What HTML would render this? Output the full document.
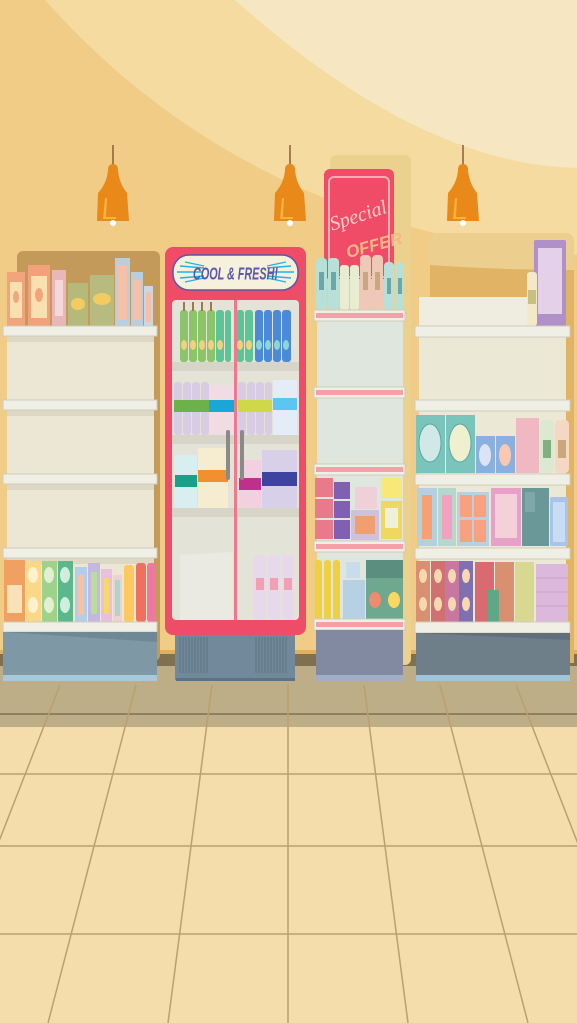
<!DOCTYPE html>
<html><head><meta charset="utf-8"><style>html,body{margin:0;padding:0;width:577px;height:1023px;overflow:hidden;background:#f0cc86}svg{display:block}</style></head>
<body>
<svg width="577" height="1023" viewBox="0 0 577 1023" xmlns="http://www.w3.org/2000/svg">
<rect width="577" height="1023" fill="#f0cc86"/>
<path d="M45 0 Q250 230 577 255 L577 0Z" fill="#f5dba0"/>
<path d="M235 0 Q420 165 577 168 L577 0Z" fill="#f7e6c2"/>
<g id="lamp">
<line x1="113" y1="145" x2="113" y2="170" stroke="#7a4a2a" stroke-width="1.3"/>
<path d="M108 190 Q108 184 113 184 Q118 184 118 190 Q119 203 127 213 L129 241 L97 241 L98 213 Q107 203 108 190Z" fill="#e8891a" transform="translate(0,-20)"/>
<path d="M103 219 L105 198 L107 198 L106 217 L116 217 L116 219Z" fill="#f6b23a"/>
<ellipse cx="113" cy="223" rx="3" ry="3" fill="#fff"/>
</g>
<use href="#lamp" x="177"/>
<use href="#lamp" x="350"/>

<rect x="0" y="650" width="577" height="5" fill="#e0b060"/>
<rect x="0" y="654" width="577" height="12" fill="#7f7050"/>
<rect x="0" y="666" width="577" height="357" fill="#f5dcab"/>
<rect x="0" y="666" width="577" height="61" fill="#bdae88"/>
<g stroke="#b9a070" stroke-width="1.5">
<line x1="0" y1="714" x2="577" y2="714" stroke="#7f7050"/>
<line x1="0" y1="774" x2="577" y2="774"/>
<line x1="0" y1="846" x2="577" y2="846"/>
<line x1="0" y1="934" x2="577" y2="934"/>
<line x1="288" y1="685" x2="288" y2="1023"/>
<line x1="212" y1="685" x2="168" y2="1023"/>
<line x1="136" y1="685" x2="48" y2="1023"/>
<line x1="60" y1="685" x2="-72" y2="1023"/>
<line x1="-16" y1="685" x2="-192" y2="1023"/>
<line x1="364" y1="685" x2="408" y2="1023"/>
<line x1="440" y1="685" x2="528" y2="1023"/>
<line x1="516" y1="685" x2="648" y2="1023"/>
<line x1="592" y1="685" x2="768" y2="1023"/>
</g>

<rect x="17" y="251" width="143" height="410" rx="6" fill="#c49a5a"/>
<rect x="7" y="330" width="147" height="300" fill="#ebe7d4"/>
<g fill="#dcd8c4"><rect x="7" y="336" width="147" height="6"/><rect x="7" y="410" width="147" height="6"/><rect x="7" y="484" width="147" height="6"/><rect x="7" y="558" width="147" height="6"/></g>
<rect x="7" y="272" width="18" height="54" fill="#f2a57a"/><rect x="10" y="282" width="12" height="36" fill="#f8e0b0"/><ellipse cx="16" cy="297" rx="3" ry="6" fill="#f2a57a"/>
<rect x="28" y="265" width="22" height="61" fill="#f3a17a"/><rect x="31" y="276" width="16" height="42" fill="#f8e0b0"/><ellipse cx="39" cy="295" rx="4" ry="7" fill="#f2a57a"/>
<rect x="52" y="270" width="14" height="56" fill="#e9b7b8"/><rect x="55" y="280" width="8" height="36" fill="#f3d8d8"/>
<rect x="68" y="283" width="20" height="43" fill="#b5b97a"/><ellipse cx="78" cy="304" rx="7" ry="6" fill="#f2cc60"/>
<rect x="90" y="275" width="24" height="51" fill="#b8bb80"/><ellipse cx="102" cy="299" rx="9" ry="6" fill="#f2cc60"/>
<rect x="115" y="258" width="15" height="68" fill="#b9cfe0"/><rect x="118" y="265" width="9" height="55" fill="#f4c0a8"/>
<rect x="131" y="272" width="12" height="54" fill="#b9cfe0"/><rect x="133" y="280" width="8" height="40" fill="#f4c0a8"/>
<rect x="144" y="286" width="9" height="40" fill="#c8d8e4"/><rect x="146" y="292" width="5" height="30" fill="#f4c0a8"/>
<rect x="4" y="560" width="21" height="62" fill="#f0a060"/><rect x="7" y="585" width="15" height="28" fill="#fae2b8"/>
<rect x="26" y="561" width="15" height="61" fill="#fbd788"/><ellipse cx="33" cy="575" rx="5" ry="8" fill="#fdf1d0"/><ellipse cx="33" cy="605" rx="5" ry="8" fill="#fdf1d0"/>
<rect x="42" y="561" width="15" height="61" fill="#9ed18a"/><ellipse cx="49" cy="575" rx="5" ry="8" fill="#e0f0d0"/><ellipse cx="49" cy="605" rx="5" ry="8" fill="#e0f0d0"/>
<rect x="58" y="561" width="15" height="61" fill="#5cb88a"/><ellipse cx="65" cy="575" rx="5" ry="8" fill="#d0eedd"/><ellipse cx="65" cy="605" rx="5" ry="8" fill="#d0eedd"/>
<rect x="75" y="567" width="12" height="55" fill="#b4cde8"/><rect x="78" y="575" width="6" height="40" fill="#f4c3a3"/>
<rect x="88" y="563" width="12" height="59" fill="#c5b8e0"/><rect x="91" y="572" width="6" height="42" fill="#b9dd9a"/>
<rect x="101" y="569" width="11" height="53" fill="#e9bfe0"/><rect x="104" y="578" width="5" height="36" fill="#f8d868"/>
<rect x="113" y="575" width="9" height="47" fill="#f0d0d0"/><rect x="115" y="580" width="5" height="36" fill="#a8d8d0"/>
<rect x="124" y="565" width="10" height="57" rx="3" fill="#fcc860"/>
<rect x="136" y="563" width="10" height="59" rx="3" fill="#f07060"/>
<rect x="147" y="563" width="9" height="59" rx="3" fill="#ef78a0"/>
<g fill="#f0efe6" stroke="#cfccba" stroke-width="1">
<rect x="3" y="326" width="154" height="10"/><rect x="3" y="400" width="154" height="10"/><rect x="3" y="474" width="154" height="10"/><rect x="3" y="548" width="154" height="10"/><rect x="3" y="622" width="154" height="10"/>
</g>
<rect x="3" y="632" width="154" height="44" fill="#7f98a5"/><path d="M3 632 L157 632 L157 642 Z" fill="#6f8896"/>
<rect x="3" y="675" width="154" height="6" fill="#a8c8dc"/>

<rect x="175" y="625" width="120" height="55" fill="#71899a"/>
<g stroke="#5d7282" stroke-width="1"><path d="M180 637v36M183 637v36M186 637v36M189 637v36M192 637v36M195 637v36M198 637v36M201 637v36M204 637v36M207 637v36M256 637v36M259 637v36M262 637v36M265 637v36M268 637v36M271 637v36M274 637v36M277 637v36M280 637v36M283 637v36M286 637v36"/></g>
<rect x="176" y="678" width="119" height="3" fill="#5d7282"/>
<rect x="165" y="247" width="141" height="388" rx="8" fill="#ef4c68"/>
<rect x="173" y="255" width="125" height="35" rx="16" fill="#f5f1dc" stroke="#5b58a8" stroke-width="1.5"/>
<g stroke="#22b3e6" stroke-width="1.4"><path d="M177 272h26M180 266l24 2M180 278l24-2M185 262l19 4M185 282l19-4M294 272h-26M291 266l-24 2M291 278l-24-2M286 262l-19 4M286 282l-19-4"/></g>
<text x="235.5" y="279" text-anchor="middle" font-family="Liberation Sans Narrow, Liberation Sans, sans-serif" font-style="italic" font-weight="bold" font-size="15" fill="#5b58a8" transform="translate(235.5,0) scale(0.72,1.15) translate(-235.5,-36)">COOL &amp; FRESH!</text>
<rect x="172" y="300" width="127" height="320" rx="4" fill="#e4e3d8"/>
<path d="M180 555 L233 552 L233 620 L180 620Z" fill="#ebeae2"/>
<g fill="#d6d5c8"><rect x="172" y="362" width="127" height="9"/><rect x="172" y="435" width="127" height="9"/><rect x="172" y="508" width="127" height="9"/></g>
<g fill="#8cc46a"><rect x="180" y="310" width="8" height="52" rx="3"/><rect x="189" y="310" width="8" height="52" rx="3"/><rect x="198" y="310" width="8" height="52" rx="3"/><rect x="207" y="310" width="8" height="52" rx="3"/></g>
<g fill="#5cc496"><rect x="216" y="310" width="8" height="52" rx="3"/><rect x="225" y="310" width="6" height="52" rx="3"/><rect x="236" y="310" width="8" height="52" rx="3"/><rect x="245" y="310" width="8" height="52" rx="3"/></g>
<g fill="#4a8ad8"><rect x="255" y="310" width="8" height="52" rx="3"/><rect x="264" y="310" width="8" height="52" rx="3"/><rect x="273" y="310" width="8" height="52" rx="3"/><rect x="282" y="310" width="9" height="52" rx="3"/></g>
<g fill="#a07a40"><rect x="183" y="302" width="2" height="9"/><rect x="192" y="302" width="2" height="9"/><rect x="201" y="302" width="2" height="9"/><rect x="210" y="302" width="2" height="9"/></g>
<g fill="#f2d080"><ellipse cx="184" cy="345" rx="3" ry="5"/><ellipse cx="193" cy="345" rx="3" ry="5"/><ellipse cx="202" cy="345" rx="3" ry="5"/><ellipse cx="211" cy="345" rx="3" ry="5"/><ellipse cx="220" cy="345" rx="3" ry="5"/><ellipse cx="240" cy="345" rx="3" ry="5"/><ellipse cx="249" cy="345" rx="3" ry="5"/></g>
<g fill="#8cd6d8"><ellipse cx="259" cy="345" rx="3" ry="5"/><ellipse cx="268" cy="345" rx="3" ry="5"/><ellipse cx="277" cy="345" rx="3" ry="5"/><ellipse cx="286" cy="345" rx="3" ry="5"/></g>
<g fill="#d8cce4"><rect x="174" y="382" width="8" height="53" rx="3"/><rect x="183" y="382" width="8" height="53" rx="3"/><rect x="192" y="382" width="8" height="53" rx="3"/><rect x="201" y="382" width="8" height="53" rx="3"/><rect x="238" y="382" width="8" height="53" rx="3"/><rect x="247" y="382" width="8" height="53" rx="3"/><rect x="256" y="382" width="8" height="53" rx="3"/><rect x="265" y="382" width="7" height="53" rx="3"/></g>
<rect x="174" y="400" width="35" height="12" fill="#6eb04a"/>
<rect x="209" y="385" width="25" height="50" fill="#f2dce4"/><rect x="209" y="400" width="25" height="12" fill="#1aa7d8"/>
<rect x="238" y="400" width="34" height="12" fill="#cfd848"/>
<rect x="273" y="380" width="24" height="55" fill="#e4ecf8"/><rect x="273" y="398" width="24" height="12" fill="#5cc6f2"/>
<rect x="175" y="455" width="22" height="53" fill="#d8eef0"/><rect x="175" y="475" width="22" height="12" fill="#18a088"/>
<rect x="198" y="448" width="30" height="60" fill="#f6ecd0"/><rect x="198" y="470" width="30" height="12" fill="#f29030"/>
<rect x="239" y="460" width="22" height="48" fill="#f2d0e0"/><rect x="239" y="478" width="22" height="12" fill="#c0308a"/>
<rect x="262" y="450" width="35" height="58" fill="#d8d0e8"/><rect x="262" y="472" width="35" height="14" fill="#3c44a0"/>
<rect x="226" y="430" width="4" height="50" rx="2" fill="#8a8a8a"/><rect x="240" y="430" width="4" height="50" rx="2" fill="#8a8a8a"/>
<g fill="#e8d8ec"><rect x="254" y="555" width="12" height="65" rx="4"/><rect x="268" y="555" width="12" height="65" rx="4"/><rect x="282" y="555" width="12" height="65" rx="4"/></g>
<g fill="#f0a0b0"><rect x="256" y="578" width="8" height="12"/><rect x="270" y="578" width="8" height="12"/><rect x="284" y="578" width="8" height="12"/></g>
<rect x="234" y="300" width="3" height="320" fill="#f0788c"/>

<rect x="330" y="155" width="81" height="510" rx="6" fill="#ecd08e"/>
<rect x="324" y="169" width="70" height="110" rx="6" fill="#f04c68"/>
<rect x="329" y="177" width="60" height="100" rx="5" fill="none" stroke="#f7b0b0" stroke-width="2"/>
<text x="358" y="222" text-anchor="middle" font-family="Liberation Serif, serif" font-style="italic" font-size="20" fill="#fbd2c8" transform="rotate(-18 358 215)">Special</text>
<text x="374" y="252" text-anchor="middle" font-family="Liberation Sans, sans-serif" font-weight="bold" font-style="italic" font-size="17" fill="#f8b888" transform="rotate(-15 370 245)">OFFER</text>
<rect x="317" y="315" width="86" height="315" fill="#dfe6de"/>
<g fill="#b8e0d8"><rect x="316" y="258" width="11" height="52" rx="4"/><rect x="328" y="258" width="11" height="52" rx="4"/><rect x="384" y="262" width="10" height="48" rx="4"/><rect x="395" y="262" width="9" height="48" rx="4"/></g>
<g fill="#e8ecd0"><rect x="340" y="265" width="9" height="45" rx="3"/><rect x="350" y="265" width="9" height="45" rx="3"/></g>
<g fill="#f0c8b8"><rect x="360" y="255" width="11" height="55" rx="4"/><rect x="372" y="255" width="11" height="55" rx="4"/></g>
<g fill="#6aa8a8"><rect x="319" y="272" width="5" height="18"/><rect x="331" y="272" width="5" height="18"/><rect x="387" y="278" width="4" height="16"/><rect x="398" y="278" width="4" height="16"/></g>
<g fill="#c8a880"><rect x="363" y="272" width="5" height="18"/><rect x="375" y="272" width="5" height="18"/></g>
<g fill="#e87a8a"><rect x="315" y="478" width="18" height="19"/><rect x="315" y="499" width="18" height="19"/><rect x="315" y="520" width="18" height="19"/></g>
<g fill="#8060b0"><rect x="334" y="482" width="16" height="17"/><rect x="334" y="501" width="16" height="17"/><rect x="334" y="520" width="16" height="19"/></g>
<rect x="355" y="487" width="22" height="22" fill="#f0d0d8"/><rect x="351" y="510" width="28" height="30" fill="#d0c0dc"/><rect x="355" y="516" width="20" height="18" fill="#f0a070"/>
<rect x="381" y="478" width="21" height="20" fill="#f8e878"/><rect x="381" y="501" width="21" height="38" fill="#f0d860"/><rect x="385" y="508" width="13" height="20" fill="#eef0d8"/>
<g fill="#f0d040"><rect x="315" y="560" width="7" height="60" rx="3"/><rect x="324" y="560" width="7" height="60" rx="3"/><rect x="333" y="560" width="7" height="60" rx="3"/></g>
<rect x="343" y="580" width="22" height="40" fill="#b8d0e4"/><rect x="346" y="562" width="14" height="16" fill="#c8dcec"/>
<rect x="366" y="560" width="37" height="60" fill="#6ea88e"/><rect x="366" y="560" width="37" height="18" fill="#5a8f80"/><ellipse cx="375" cy="600" rx="6" ry="8" fill="#f08a70"/><ellipse cx="394" cy="600" rx="6" ry="8" fill="#f8d860"/>
<g fill="#f0efe6" stroke="#cfccba" stroke-width="1"><rect x="314" y="310" width="91" height="11"/><rect x="314" y="387" width="91" height="11"/><rect x="314" y="464" width="91" height="11"/><rect x="314" y="541" width="91" height="11"/><rect x="314" y="619" width="91" height="11"/></g>
<g fill="#f4a0a8"><rect x="316" y="313" width="87" height="5"/><rect x="316" y="390" width="87" height="5"/><rect x="316" y="467" width="87" height="5"/><rect x="316" y="544" width="87" height="5"/><rect x="316" y="622" width="87" height="5"/></g>
<rect x="316" y="630" width="87" height="46" fill="#818aa0"/><rect x="316" y="675" width="87" height="6" fill="#a4adc6"/>

<rect x="430" y="233" width="144" height="430" rx="8" fill="#eccf8f"/>
<path d="M430 265 Q500 270 574 270 L574 663 L430 663Z" fill="#e0b464"/>
<rect x="419" y="333" width="147" height="295" fill="#ebe8d6"/>
<rect x="419" y="297" width="110" height="30" fill="#efece0"/>
<rect x="534" y="240" width="32" height="86" rx="2" fill="#b090c8"/><rect x="538" y="248" width="24" height="66" fill="#e4d0e8"/>
<rect x="527" y="272" width="10" height="54" rx="3" fill="#f3e8c8"/><rect x="528" y="290" width="8" height="14" fill="#c8c080"/>
<rect x="416" y="415" width="29" height="58" fill="#7ac4bc"/><ellipse cx="430" cy="443" rx="11" ry="19" fill="#d0e8e8" stroke="#5aa8a0"/>
<rect x="446" y="415" width="29" height="58" fill="#7ac4bc"/><ellipse cx="460" cy="443" rx="11" ry="19" fill="#eef0d0" stroke="#5aa8a0"/>
<rect x="476" y="436" width="19" height="37" fill="#8ab0e0"/><ellipse cx="485" cy="455" rx="6" ry="11" fill="#dce4f4"/>
<rect x="496" y="436" width="19" height="37" fill="#8ab0e0"/><ellipse cx="505" cy="455" rx="6" ry="11" fill="#f8c8b0"/>
<rect x="516" y="418" width="23" height="55" fill="#f0b8c0"/>
<rect x="540" y="420" width="14" height="53" rx="4" fill="#dde8d0"/><rect x="543" y="440" width="8" height="18" fill="#80b080"/>
<rect x="555" y="420" width="14" height="53" rx="4" fill="#f4d8c4"/><rect x="558" y="440" width="8" height="18" fill="#c8a878"/>
<rect x="417" y="488" width="20" height="58" fill="#b4d0e0"/><rect x="422" y="495" width="10" height="44" fill="#f8a070"/>
<rect x="438" y="488" width="18" height="58" fill="#b4d8cc"/><rect x="442" y="495" width="10" height="44" fill="#f4a0c0"/>
<rect x="457" y="492" width="32" height="54" fill="#b8d0e0"/><rect x="460" y="495" width="12" height="22" fill="#f8a080"/><rect x="474" y="495" width="12" height="22" fill="#f8a080"/><rect x="460" y="520" width="12" height="22" fill="#f8a080"/><rect x="474" y="520" width="12" height="22" fill="#f8a080"/>
<rect x="491" y="488" width="30" height="58" fill="#e8a0c8"/><rect x="495" y="494" width="22" height="44" fill="#f4d0d8"/>
<rect x="522" y="488" width="27" height="58" fill="#6a9898"/><rect x="525" y="492" width="10" height="20" fill="#80a8a8"/>
<rect x="550" y="497" width="18" height="49" rx="2" fill="#a8c4e8"/><rect x="553" y="502" width="12" height="40" fill="#c8dcf4"/>
<rect x="416" y="561" width="14" height="61" fill="#d89070"/><rect x="431" y="561" width="14" height="61" fill="#d07070"/><rect x="445" y="561" width="14" height="61" fill="#c878a0"/><rect x="459" y="561" width="14" height="61" fill="#8070b0"/>
<g fill="#f8d8b0"><ellipse cx="423" cy="576" rx="4" ry="7"/><ellipse cx="423" cy="604" rx="4" ry="7"/><ellipse cx="438" cy="576" rx="4" ry="7"/><ellipse cx="438" cy="604" rx="4" ry="7"/><ellipse cx="452" cy="576" rx="4" ry="7"/><ellipse cx="452" cy="604" rx="4" ry="7"/><ellipse cx="466" cy="576" rx="4" ry="7"/><ellipse cx="466" cy="604" rx="4" ry="7"/></g>
<rect x="475" y="562" width="19" height="60" fill="#d86a70"/><rect x="495" y="562" width="19" height="60" fill="#d89070"/><rect x="515" y="562" width="19" height="60" fill="#d8d890"/><rect x="488" y="590" width="11" height="32" fill="#5ea888"/>
<rect x="536" y="564" width="32" height="58" fill="#dcb8dc"/><g stroke="#c8a0c8"><path d="M536 578h32M536 592h32M536 606h32"/></g>
<g fill="#f0efe6" stroke="#cfccba" stroke-width="1"><rect x="415" y="326" width="155" height="11"/><rect x="415" y="400" width="155" height="11"/><rect x="415" y="474" width="155" height="11"/><rect x="415" y="548" width="155" height="11"/><rect x="415" y="622" width="155" height="11"/></g>
<rect x="416" y="633" width="154" height="43" fill="#6e7f8a"/><path d="M416 633 L570 633 L570 640Z" fill="#5f707a"/>
<rect x="416" y="675" width="154" height="6" fill="#a0c4d8"/>
</svg>
</body></html>
